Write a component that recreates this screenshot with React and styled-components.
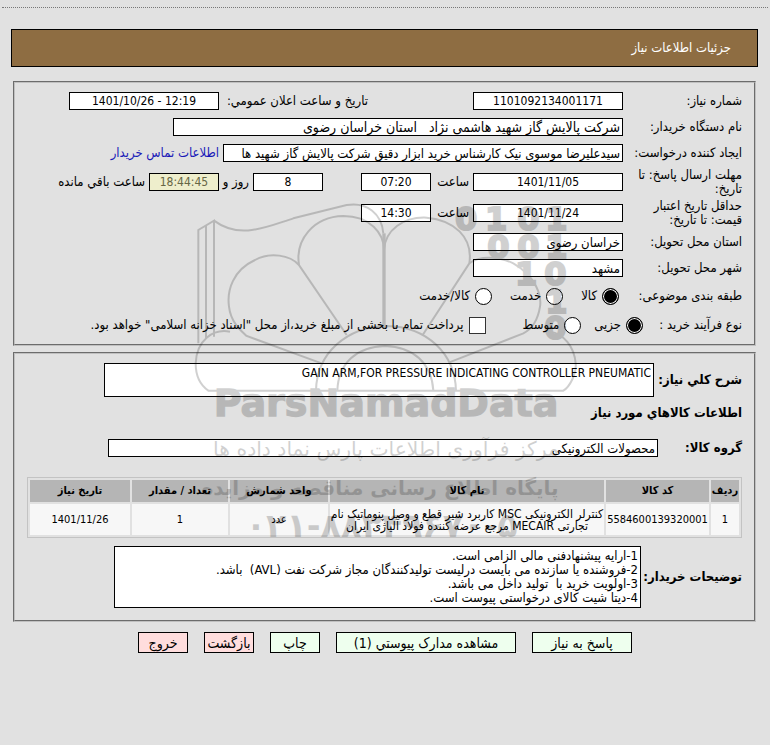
import React from 'react';
import styled, { createGlobalStyle } from 'styled-components';

const GlobalStyle = createGlobalStyle`
    body {
        margin: 0;
        background-color: #e1e1e1;
        color: black;
    }

    body, input, textarea, button, table {
        font-family: "DejaVu Sans Condensed", "DejaVu Sans", sans-serif;
        font-size: 13px;
        line-height: 14px;
    }

    *, *::before, *::after {
        box-sizing: border-box;
    }
`;

const Page = styled.div`
    position: relative;
    padding: 7px 2px 92px;
`;

const Divider = styled.hr`
    margin: 0;
    border: 0;
    border-top: 1px dotted #777;
`;

const Header = styled.h1`
    margin: 21px 10px 14px 9px;
    padding: 11px 26px;
    border: 1px solid black;
    background-color: #8e6d42;
    color: white;
    font-size: 13px;
    font-weight: normal;
    line-height: 14px;
`;

const Panel = styled.section`
    margin: 0 12px 6px 11px;
    padding: ${props => props.$padding};
    border: 2px groove #c0c0c0;
`;

const Row = styled.div`
    display: flex;
    align-items: center;
    min-height: ${props => props.$height || 26}px;
`;

const Label = styled.label`
    flex: none;
    width: ${props => props.$width || 119}px;
    font-weight: ${props => (props.$bold ? 'bold' : 'normal')};
    white-space: nowrap;
`;

const SideLabel = styled.label`
    flex: none;
    width: 149px;
    margin-right: 105px;
    white-space: nowrap;
`;

const Field = styled.input`
    flex: none;
    width: ${props => props.$width || 150}px;
    height: 18px;
    padding: 0 2px;
    border: 1px solid black;
    border-radius: 0;
    background-color: white;
    font-size: ${props => (props.$center ? 12 : props.$size || 13)}px;
    text-align: ${props => (props.$center ? 'center' : 'right')};
`;

const Countdown = styled(Field)`
    background-color: #eeeecc;
    color: #666644;
`;

const Unit = styled.span`
    width: ${props => props.$width}px;
    padding-right: 4px;
    white-space: nowrap;
`;

const Gap = styled.span`
    width: 38px;
`;

const ContactLink = styled.a`
    margin-right: 4px;
    color: #1a1ab8;
    text-decoration: none;
`;

const Options = styled.div`
    display: flex;
    align-items: center;
    gap: ${props => props.$gap}px;
    padding-right: ${props => props.$indent || 0}px;
`;

const Option = styled.label`
    display: flex;
    align-items: center;
    gap: 5px;
    white-space: nowrap;
`;

const Radio = styled.input`
    appearance: none;
    width: 17px;
    height: 17px;
    margin: 0;
    border: 1px solid black;
    border-radius: 50%;
    background-color: white;

    &:checked {
        background-color: black;
        box-shadow: inset 0 0 0 1px white;
    }
`;

const Checkbox = styled.input`
    appearance: none;
    width: 17px;
    height: 17px;
    margin: 0;
    border: 1px solid #333;
    background-color: white;
`;

const Memo = styled.textarea`
    display: block;
    flex: none;
    width: ${props => props.$width}px;
    height: ${props => props.$height}px;
    padding: 2px;
    border: 1px solid black;
    background-color: white;
    font-size: ${props => props.$size}px;
    overflow: hidden;
    resize: none;
`;

const Subtitle = styled.h2`
    margin: 9px 0 19px;
    font-size: 13px;
    line-height: 14px;
`;

const Items = styled.table`
    width: 100%;
    margin: 20px 0 8px;
    border: 1px solid #c3c3c3;
    border-spacing: 2px;
    table-layout: fixed;
    font-size: 11px;
    line-height: 12px;
    text-align: center;

    th {
        height: 22px;
        padding: 0;
        background-color: #b5b5b5;
    }

    td {
        height: 31px;
        padding: 0;
        background-color: #f7f7f7;
    }
`;

const NameCell = styled.td`
    font-size: 12px;
`;

const Actions = styled.div`
    display: flex;
    justify-content: center;
    gap: 16px;
    margin-top: 10px;
`;

const Button = styled.button`
    width: ${props => props.$width}px;
    height: 21px;
    padding: 0;
    border: 1px solid black;
    background-color: ${props => (props.$leave ? '#ffdddd' : '#eeffee')};
    font-size: 14px;
    white-space: nowrap;
`;

const Watermark = styled.svg`
    position: absolute;
    top: 180px;
    left: calc(50% - 205px);
    width: 400px;
    height: 370px;
    opacity: 0.18;
    pointer-events: none;
`;

function Logo() {
    return (
        <Watermark viewBox="0 0 1200 1110" direction="ltr" aria-hidden="true">
            <g fill="none" stroke="black" strokeWidth="6">
                <path d="M55 490V150L102 122V470M78 138V476" />
                <path d="M102 122C180 180 260 140 340 115L500 75C560 65 605 100 610 160" />
                <path d="M500 465L357 255C345 180 400 110 490 108C570 108 612 160 612 210" />
                <path d="M612 160V437" strokeWidth="10" />
                <path d="M612 210C615 150 670 110 740 113C820 120 880 170 868 250L728 465" />
                <path d="M357 255C330 225 270 215 225 240C160 270 140 330 147 380C152 425 180 450 200 468L425 550" />
                <path d="M868 250C900 225 960 230 1000 250C1070 290 1085 350 1080 380C1072 430 1050 450 1030 460L808 547" />
                <path d="M150 455C100 445 50 480 47 550C47 590 60 615 85 632H1150C1170 620 1190 580 1187 550C1183 500 1150 460 1110 455" />
                <path d="M408 632C410 520 500 440 620 438C740 440 825 520 828 632" />
                <path d="M472 632C475 550 530 500 615 498C700 500 755 550 760 632" />
            </g>
            <g fontFamily="DejaVu Sans" fontWeight="bold" fontSize="96" stroke="black" strokeWidth="6">
                <text x="825 915 1012 1096" y="151">0101</text>
                <text x="922 1012 1096" y="234">001</text>
                <text x="1005 1093" y="316">10</text>
                <text x="1096" y="398">1</text>
                <text x="1093" y="476">0</text>
            </g>
            <g fontFamily="DejaVu Sans" textAnchor="middle">
                <text x="618" y="709" fontSize="114" fontWeight="bold" stroke="black" strokeWidth="4">ParsNamadData</text>
                <text x="618" y="828" fontSize="61">مرکز فرآوری اطلاعات پارس نماد داده ها</text>
                <text x="600" y="944" fontSize="60" fontWeight="bold">پایگاه اطلاع رسانی مناقصه و مزایده</text>
                <text x="605" y="1072" fontSize="100" fontWeight="bold">۰۲۱-۸۸۳۴۹۶۷۰-۵</text>
            </g>
        </Watermark>
    );
}

const notes = `1-ارایه پیشنهادفنی مالی الزامی است.
2-فروشنده یا سازنده می بایست درلیست تولیدکنندگان مجاز شرکت نفت (AVL)  باشد.
3-اولویت خرید با  تولید داخل می باشد.
4-دیتا شیت کالای درخواستی پیوست است.`;

export default function App() {
    return (
        <Page dir="rtl" lang="fa">
            <GlobalStyle />
            <Divider />
            <Header>جزئیات اطلاعات نیاز</Header>
            <Panel $padding="5px 12px">
                <Row>
                    <Label htmlFor="number">شماره نیاز:</Label>
                    <Field id="number" $center readOnly defaultValue="1101092134001171" />
                    <SideLabel htmlFor="announced">تاریخ و ساعت اعلان عمومي:</SideLabel>
                    <Field id="announced" dir="ltr" $center readOnly defaultValue="1401/10/26 - 12:19" />
                </Row>
                <Row>
                    <Label htmlFor="buyer">نام دستگاه خریدار:</Label>
                    <Field id="buyer" $width={450} $size={14} readOnly defaultValue="شرکت پالایش گاز شهید هاشمی نژاد   استان خراسان رضوی" />
                </Row>
                <Row>
                    <Label htmlFor="creator">ایجاد کننده درخواست:</Label>
                    <Field id="creator" $width={400} readOnly defaultValue="سیدعلیرضا موسوی نیک کارشناس خرید ابزار دقیق شرکت پالایش گاز شهید ها" />
                    <ContactLink href="#contact">اطلاعات تماس خریدار</ContactLink>
                </Row>
                <Row $height={31}>
                    <Label htmlFor="deadline">مهلت ارسال پاسخ: تا<br />تاریخ:</Label>
                    <Field id="deadline" $center readOnly defaultValue="1401/11/05" />
                    <Unit $width={42}>ساعت</Unit>
                    <Field aria-label="ساعت" $width={70} $center readOnly defaultValue="07:20" />
                    <Gap />
                    <Field aria-label="روز" $width={70} $center readOnly defaultValue="8" />
                    <Unit $width={34}>روز و</Unit>
                    <Countdown aria-label="ساعت باقي مانده" $width={70} $center readOnly defaultValue="18:44:45" />
                    <Unit>ساعت باقي مانده</Unit>
                </Row>
                <Row $height={32}>
                    <Label htmlFor="validity">حداقل تاریخ اعتبار<br />قیمت: تا تاریخ:</Label>
                    <Field id="validity" $center readOnly defaultValue="1401/11/24" />
                    <Unit $width={42}>ساعت</Unit>
                    <Field aria-label="ساعت" $width={70} $center readOnly defaultValue="14:30" />
                </Row>
                <Row>
                    <Label htmlFor="province">استان محل تحویل:</Label>
                    <Field id="province" readOnly defaultValue="خراسان رضوی" />
                </Row>
                <Row>
                    <Label htmlFor="city">شهر محل تحویل:</Label>
                    <Field id="city" readOnly defaultValue="مشهد" />
                </Row>
                <Row $height={30}>
                    <Label as="span">طبقه بندی موضوعی:</Label>
                    <Options $gap={18} $indent={4}>
                        <Option><Radio type="radio" name="category" defaultChecked />کالا</Option>
                        <Option><Radio type="radio" name="category" />خدمت</Option>
                        <Option><Radio type="radio" name="category" />کالا/خدمت</Option>
                    </Options>
                </Row>
                <Row $height={28}>
                    <Label as="span" $width={99}>نوع فرآیند خرید :</Label>
                    <Options $gap={13}>
                        <Option><Radio type="radio" name="process" defaultChecked />جزیی</Option>
                        <Option><Radio type="radio" name="process" />متوسط</Option>
                    </Options>
                    <Options $indent={37}>
                        <Option><Checkbox type="checkbox" />پرداخت تمام یا بخشی از مبلغ خرید،از محل "اسناد خزانه اسلامی" خواهد بود.</Option>
                    </Options>
                </Row>
            </Panel>
            <Panel $padding="9px 12px 12px">
                <Row>
                    <Label htmlFor="summary" $bold $width={88}>شرح کلي نیاز:</Label>
                    <Memo id="summary" $width={550} $height={34} $size={12} readOnly defaultValue="GAIN ARM,FOR PRESSURE INDICATING CONTROLLER PNEUMATIC" />
                </Row>
                <Subtitle>اطلاعات کالاهاي مورد نیاز</Subtitle>
                <Row $height={18}>
                    <Label htmlFor="group" $bold $width={84}>گروه کالا:</Label>
                    <Field id="group" $width={550} readOnly defaultValue="محصولات الکترونیکی" />
                </Row>
                <Items>
                    <colgroup>
                        <col width="28" />
                        <col width="103" />
                        <col />
                        <col width="98" />
                        <col width="96" />
                        <col width="100" />
                    </colgroup>
                    <thead>
                        <tr>
                            <th>ردیف</th>
                            <th>کد کالا</th>
                            <th>نام کالا</th>
                            <th>واحد شمارش</th>
                            <th>تعداد / مقدار</th>
                            <th>تاریخ نیاز</th>
                        </tr>
                    </thead>
                    <tbody>
                        <tr>
                            <td>1</td>
                            <td>5584600139320001</td>
                            <NameCell>کنترلر الکترونیکی MSC کاربرد شیر قطع و وصل پنوماتیک نام تجارتی MECAIR مرجع عرضه کننده فولاد آلیاژی ایران</NameCell>
                            <td>عدد</td>
                            <td>1</td>
                            <td>1401/11/26</td>
                        </tr>
                    </tbody>
                </Items>
                <Row>
                    <Label htmlFor="notes" $bold $width={101}>توضیحات خریدار:</Label>
                    <Memo id="notes" $width={527} $height={62} $size={13} readOnly defaultValue={notes} />
                </Row>
            </Panel>
            <Actions>
                <Button type="button" $width={100}>پاسخ به نیاز</Button>
                <Button type="button" $width={180}>مشاهده مدارک پیوستي (1)</Button>
                <Button type="button" $width={50}>چاپ</Button>
                <Button type="button" $width={50} $leave>بازگشت</Button>
                <Button type="button" $width={50} $leave>خروج</Button>
            </Actions>
            <Logo />
        </Page>
    );
}
